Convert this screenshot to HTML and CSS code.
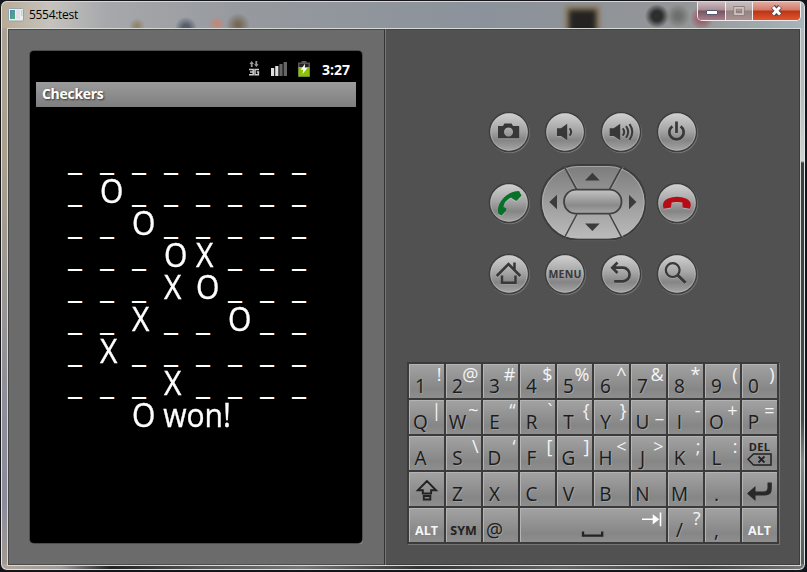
FILE: index.html
```html
<!DOCTYPE html>
<html lang="en">
<head>
<meta charset="utf-8">
<title>5554:test</title>
<link rel="stylesheet" href="styles.css">
</head>
<body>
<div class="window">
  <header class="titlebar">
    <svg class="app-icon" width="16" height="14" viewBox="0 0 16 14"><rect x=".5" y=".5" width="15" height="12.5" rx="1" fill="#e8eef2" stroke="#98a2ad"/><rect x="2" y="2" width="5" height="9" fill="url(#app)"/><rect x="8" y="2" width="4" height="9" fill="#e4dfe2"/><rect x="13" y="2" width="1.5" height="6" fill="#b9dcd2"/></svg>
    <span class="title">5554:test</span>
    <div class="controls">
      <span class="ctl min"><svg width="12" height="6" viewBox="0 0 12 6"><rect x=".5" y=".5" width="11" height="4" rx=".5" fill="#fff" stroke="#54586a"/></svg></span>
      <span class="ctl max"><svg width="12" height="10" viewBox="0 0 12 10"><path d="M2 1.8h8v6.4H2z" fill="none" stroke="#8d8080" stroke-width="3.4"/><path d="M2 1.8h8v6.4H2z" fill="none" stroke="#d0c2c0" stroke-width="1.7"/></svg></span>
      <span class="ctl close"><svg width="13" height="12" viewBox="0 0 13 12"><path d="M3 1.500l7 8.500M10 1.500l-7 8.500" stroke="#50434f" stroke-width="5"/><path d="M3 2l7 7.600M10 2l-7 7.600" stroke="#fff" stroke-width="3"/></svg></span>
    </div>
  </header>
  <main class="client">
    <section class="device">
      <div class="screen">
        <div class="status">
          <svg width="12" height="16" viewBox="0 0 12 16"><path d="M3.700 0L6 3H4.600v3H2.800V3H1.400zM8.300 6L6 3.200h1.400V0h1.800v3.200h1.500z" fill="#999"/><path d="M1 8.500h4.200v5.200H1M2 11h3M11 8.500H7v5.200h3.400V11H8.800" fill="none" stroke="#ccc" stroke-width="1.500"/></svg>
          <svg class="signal" width="16" height="14" viewBox="0 0 16 14"><path d="M0 6h3.200v8H0zM4.200 4h3.200v10H4.200z" fill="#dedede"/><path d="M8.400 2h3.200v12H8.400zM12.600 0h3.400v14h-3.400z" fill="#666"/></svg>
          <svg class="battery" width="12" height="16" viewBox="0 0 12 16"><path d="M3.500 0h5v1.600H12V16H0V1.600h3.500z" fill="#555"/><path d="M1.500 3h9v3h-9z" fill="#222"/><path d="M.5 6h11v9.500H.5z" fill="#8cc207"/><path d="M7 2.800L2.700 8.700h2.500L4.600 13l4.800-6H6.800z" fill="#fff"/></svg>
          <span>3:27</span>
        </div>
        <div class="app-title">Checkers</div>
        <div class="board">
          <i>_</i><i>_</i><i>_</i><i>_</i><i>_</i><i>_</i><i>_</i><i>_</i>
          <i>_</i><i class="piece">O</i><i>_</i><i>_</i><i>_</i><i>_</i><i>_</i><i>_</i>
          <i>_</i><i>_</i><i class="piece">O</i><i>_</i><i>_</i><i>_</i><i>_</i><i>_</i>
          <i>_</i><i>_</i><i>_</i><i class="piece">O</i><i class="piece">X</i><i>_</i><i>_</i><i>_</i>
          <i>_</i><i>_</i><i>_</i><i class="piece">X</i><i class="piece">O</i><i>_</i><i>_</i><i>_</i>
          <i>_</i><i>_</i><i class="piece">X</i><i>_</i><i>_</i><i class="piece">O</i><i>_</i><i>_</i>
          <i>_</i><i class="piece">X</i><i>_</i><i>_</i><i>_</i><i>_</i><i>_</i><i>_</i>
          <i>_</i><i>_</i><i>_</i><i class="piece">X</i><i>_</i><i>_</i><i>_</i><i>_</i>
          <b class="won piece">O won!</b>
        </div>
      </div>
    </section>
    <section class="controls-panel">
      <div class="pad">
        <svg class="btn" viewBox="-22 -22 44 44"><use href="#disc"/><g class="glyph"><path fill-rule="evenodd" d="M-11-6h5l1.400-2.600h7.200L4-6h6.200V6.300H-11zM-.5-4.500a4.500 4.500 0 1 0 .01 0z"/></g></svg>
        <svg class="btn" viewBox="-22 -22 44 44"><use href="#disc"/><g class="glyph"><path d="M-8-3.800h4L2.200-8.200V8.300L-4 4h-4z"/><path class="ln" stroke-width="2" d="M4.600-3.600q3 3.600 0 7.200"/></g></svg>
        <svg class="btn" viewBox="-22 -22 44 44"><use href="#disc"/><g class="glyph"><path d="M-11.300-3.800h4L-.8-8.200V8.300L-7.300 4h-4z"/><path class="ln" stroke-width="2" d="M1.700-3.600q3 3.600 0 7.200M5-5.800q4.400 5.800 0 11.600M8.500-7.800q5.600 7.800 0 15.600"/></g></svg>
        <svg class="btn" viewBox="-22 -22 44 44"><use href="#disc"/><g class="glyph"><path class="ln" stroke-width="2.700" d="M-4.600-5.700a7.200 7.200 0 1 0 8.200 0M-.5-10.500V1"/></g></svg>

        <svg class="btn" viewBox="-22 -22 44 44"><use href="#disc"/><path class="tinted" fill="#08702a" d="M-10.500 11Q-13 3-5-5.500Q2-12 10-12L12.500-7.500L7.500-2L4-4L2-5.500Q-5-2-5.500 4L-2.500 5.500L-3 8L-7.500 12.500z"/></svg>
        <svg class="dpad" width="108" height="78" viewBox="-1 -1 108 78">
          <rect x="1.300" y="1.500" width="105" height="75" rx="37.500" fill="none" stroke="#707070"/>
          <rect x=".9" y=".9" width="104.700" height="74.700" rx="37.300" fill="url(#dp)" stroke="#3d3d3d" stroke-width="2"/>
          <rect x="2.500" y="2.500" width="101.500" height="71.500" rx="35.700" fill="none" stroke="#bbb" stroke-opacity=".65"/>
          <path d="M24.300 2.500L37 26M82 2.500L69.300 26M24.300 74L37 50M82 74L69.300 50" stroke="#444" stroke-width="1.600"/>
          <path d="M25.700 3L37.500 24M83.300 3L71 26M25.700 73.500L38 51M83.300 73.500L71 50" stroke="#bbb" stroke-opacity=".5" stroke-width=".8"/>
          <rect x="24" y="25.700" width="57.500" height="24" rx="12" fill="url(#pill)" stroke="#414141" stroke-width="1.800"/>
          <path fill="#3b3b3b" d="M52.400 8.700L59.700 16.500H45zM52.400 67L45 59.500h14.700zM9.300 38L17 30.700v14.600zM96.400 38L89 30.700v14.600z"/>
        </svg>
        <svg class="btn" viewBox="-22 -22 44 44"><use href="#disc"/><path class="tinted" fill="#b60c16" d="M-14 3Q-14.500-2-9-4.500Q0-7.800 9-4.500Q14.500-2 13.700 3L13 5.800L5.600 4.500L5.300-.5Q0-1.600-5.300-.5L-6 4.500L-13.500 5.800z"/></svg>

        <svg class="btn" viewBox="-22 -22 44 44"><use href="#disc"/><g class="glyph"><path class="ln" stroke-width="2.500" d="M-12.300 2L-.5-10L11.300 2M5.500-11.500v8M-7 1.500v7.200h13.500v-7.200"/></g></svg>
        <svg class="btn" viewBox="-22 -22 44 44"><use href="#disc"/><text class="menu" x="0" y="4">MENU</text></svg>
        <svg class="btn" viewBox="-22 -22 44 44"><use href="#disc"/><g class="glyph"><path class="ln" stroke-width="2.700" d="M-3.500-11.500L-8.700-6.300L-3.500-1M-8.500-6.300H1.800a6.600 6.600 0 0 1 0 13.600h-8.600"/></g></svg>
        <svg class="btn" viewBox="-22 -22 44 44"><use href="#disc"/><g class="glyph"><circle class="ln" cx="-4.300" cy="-3.900" r="6.900" stroke-width="2.200"/><path class="ln" stroke-width="3" d="M.5 1L8.500 8.800"/></g></svg>
      </div>

      <div class="keys">
        <div class="key"><b>1</b><s>!</s></div><div class="key"><b>2</b><s>@</s></div><div class="key"><b>3</b><s>#</s></div><div class="key"><b>4</b><s>$</s></div><div class="key"><b>5</b><s>%</s></div><div class="key"><b>6</b><s>^</s></div><div class="key"><b>7</b><s>&amp;</s></div><div class="key"><b>8</b><s>*</s></div><div class="key"><b>9</b><s>(</s></div><div class="key"><b>0</b><s>)</s></div>
        <div class="key"><b>Q</b><s>|</s></div><div class="key"><b>W</b><s>~</s></div><div class="key"><b>E</b><s>“</s></div><div class="key"><b>R</b><s>`</s></div><div class="key"><b>T</b><s>{</s></div><div class="key"><b>Y</b><s>}</s></div><div class="key"><b>U</b><s>_</s></div><div class="key"><b>I</b><s>-</s></div><div class="key"><b>O</b><s>+</s></div><div class="key"><b>P</b><s>=</s></div>
        <div class="key"><b>A</b></div><div class="key"><b>S</b><s>\</s></div><div class="key"><b>D</b><s>‘</s></div><div class="key"><b>F</b><s>[</s></div><div class="key"><b>G</b><s>]</s></div><div class="key"><b>H</b><s>&lt;</s></div><div class="key"><b>J</b><s>&gt;</s></div><div class="key"><b>K</b><s>;</s></div><div class="key"><b>L</b><s>:</s></div>
        <div class="key del"><span>DEL</span><svg width="25" height="13" viewBox="0 0 25 13"><path d="M1 6.300L6.500 1H24v11H6.500z" fill="none" stroke="#222" stroke-width="1.500"/><path d="M11.500 3.500l6 6M17.500 3.500l-6 6" stroke="#222" stroke-width="1.800"/></svg></div>
        <div class="key icon"><svg width="35" height="34" viewBox="0 0 35 34"><path d="M18 9L8.800 18.300h5v3.200h8.300v-3.200h5zM14.800 24h6.500v3.500h-6.500z" fill="none" stroke="#222" stroke-width="1.900"/></svg></div>
        <div class="key"><b>Z</b></div><div class="key"><b>X</b></div><div class="key"><b>C</b></div><div class="key"><b>V</b></div><div class="key"><b>B</b></div><div class="key"><b>N</b></div><div class="key"><b>M</b></div><div class="key"><b>.</b></div>
        <div class="key icon"><svg width="35" height="34" viewBox="0 0 35 34"><path d="M5 21.500L13.500 14v5.500h8q4 0 4-4V10.500h4.300v6q0 7-7 7h-9.300V29z" fill="#292929"/></svg></div>
        <div class="key mod lit">ALT</div><div class="key mod">SYM</div><div class="key"><b>@</b></div>
        <div class="key space"><svg width="146" height="34" viewBox="0 0 146 34"><path d="M63 23.500v4.200h19.200v-4.200" fill="none" stroke="#222" stroke-width="2.300"/><path d="M122 11.300h16M133.500 7.800l4.500 3.500-4.500 3.500zM140.500 4.500v13.700" fill="#fff" stroke="#fff" stroke-width="1.600"/></svg></div>
        <div class="key"><b>/</b><s>?</s></div><div class="key"><b>,</b></div><div class="key mod lit">ALT</div>
      </div>
    </section>
  </main>
</div>
<svg class="defs" width="0" height="0">
  <defs>
    <linearGradient id="app" x2="1" y2="1"><stop stop-color="#4f86b5"/><stop offset="1" stop-color="#4fae74"/></linearGradient>
    <linearGradient id="metal" x2="0" y2="1"><stop stop-color="#d0d0d0"/><stop offset=".45" stop-color="#a6a6a6"/><stop offset=".72" stop-color="#858585"/><stop offset="1" stop-color="#a6a6a6"/></linearGradient>
    <linearGradient id="pill" x2="0" y2="1"><stop stop-color="#c4c4c4"/><stop offset=".65" stop-color="#8a8a8a"/><stop offset="1" stop-color="#a8a8a8"/></linearGradient>
    <linearGradient id="dp" x2="0" y2="1"><stop stop-color="#7c7c7c"/><stop offset="1" stop-color="#bcbcbc"/></linearGradient>
    <g id="disc"><circle cx=".7" cy=".9" r="20.300" fill="#757575"/><circle r="20.300" fill="#3d3d3d"/><circle r="18.800" fill="url(#metal)"/><circle r="18.200" fill="none" stroke="#d0d0d0" stroke-opacity=".4"/></g>
  </defs>
</svg>
</body>
</html>
```
FILE: styles.css
```css
* { box-sizing: border-box; }
body {
  margin: 0;
  background: #11141a;
  font-family: "Open Sans", "Noto Sans", sans-serif;
}
.defs { display: block; height: 0; }
.window {
  width: 806px;
  height: 571px;
  border: 1px solid #16161a;
  border-radius: 7px;
  padding: 0 6px 6px;
  overflow: hidden;
  box-shadow: inset 0 0 0 1px #dfe3e6;
  background:
    linear-gradient(90deg, #b3a598 0, #9c9a98 60px, #222 110px, #555 200px, #777 300px, #333 420px, #666 560px, #444 700px, #777) 0 100% / 100% 6px no-repeat,
    linear-gradient(#a9b9c0, #b5babd 90px, #d0d0d0 160px, #3e3e3e 162px, #4a4a4a 420px, #888 460px, #555) 100% 0 / 7px 100% no-repeat,
    linear-gradient(#a9a297, #aaa08c 150px, #8d8e98 400px, #8b8b9b 500px, #a39a90) 0 0 / 7px 100% no-repeat,
    #777;
}
.titlebar {
  position: relative;
  height: 27px;
  margin: 0 -5px;
  padding-left: 6px;
  display: flex;
  align-items: center;
  overflow: hidden;
  border-top: 1px solid #d5d8db;
  border-radius: 6px 6px 0 0;
  background:
    radial-gradient(circle at 655px 14px, #2e2e2e 0 5px, #2e2e2e00 12px),
    radial-gradient(circle at 676px 14px, #6d706e 0 3px, #6d706e00 12px),
    radial-gradient(circle at 700px 16px, #9a5865 0 3px, #9a586500 12px),
    radial-gradient(circle at 184px 26px, #555d6b 0 3px, #555d6b00 11px),
    radial-gradient(circle at 215px 22px, #c28878 0 1px, #c2887800 8px),
    radial-gradient(circle at 236px 23px, #756858 0 2px, #75685800 12px),
    radial-gradient(circle at 135px 24px, #8f8468 0 1px, #8f846800 8px),
    linear-gradient(90deg, #b8ab95, #c6c3be 6%, #a6a8ab 13%, #96999e 30%, #8b929b 60%, #949597 85%, #a6b5ba);
}
.titlebar::before {
  content: "";
  position: absolute;
  left: 567px;
  top: 8px;
  width: 27px;
  height: 26px;
  background: #242322;
  box-shadow: 0 0 0 4px #8c7a5c;
  filter: blur(2.5px);
}
.title {
  margin-left: 5px;
  font: 12px/16px "Open Sans", sans-serif;
  letter-spacing: -.3px;
  color: #000;
}
.controls {
  position: relative;
  display: flex;
  align-self: flex-start;
  height: 20px;
  margin: -1px 3px 0 auto;
  border: 1px solid #f0eaea;
  border-top: 0;
  border-radius: 0 0 5px 5px;
  overflow: hidden;
}
.ctl { display: flex; align-items: center; justify-content: center; }
.min { width: 28px; padding-top: 4px; background: linear-gradient(#d0c0c4, #a98c94 48%, #755360 52%, #a77f8b); border-right: 1px solid #eee; }
.max { width: 27px; background: linear-gradient(#c9c0c0, #b3a7a6 48%, #91817f 52%, #a99492); border-right: 1px solid #eee; }
.close { width: 47px; background: linear-gradient(#e2b1a8, #d37a65 48%, #b93517 52%, #e1552b); }
.client {
  display: flex;
  width: 794px;
  height: 538px;
  border: 1px solid #d6dad7;
  overflow: hidden;
}
.device {
  width: 377px;
  padding: 22px 0 0 22px;
  background: #6b6b6b;
  border-right: 1px solid #343434;
  box-shadow: inset 1px 1px #4b4b4b, inset 0 -1px #4b4b4b;
}
.screen {
  width: 332px;
  height: 492px;
  padding: 6px;
  background: #000;
  border-radius: 4px;
  box-shadow: 0 0 0 1px #4d4d4d, 1px 1px 0 0 #a0a0a0;
  color: #fff;
}
.status {
  height: 25px;
  width: 320px;
  display: flex;
  align-items: center;
  justify-content: flex-end;
  padding: 0 6px 1px 0;
  font-weight: 700;
  font-size: 14px;
}
.signal { margin-left: 11px; }
.battery { margin: 0 12px 0 11px; }
.app-title {
  width: 320px;
  height: 25px;
  padding-left: 6px;
  background: linear-gradient(#9b9b9b, #7e7e7e);
  font: 700 14px/24px "Open Sans", sans-serif;
  letter-spacing: -.3px;
  text-shadow: 1px 1px 2px #333;
}
.board {
  display: grid;
  grid-template-columns: repeat(8, 32px);
  grid-auto-rows: 32px;
  margin: 35px 0 0 32px;
  font-size: 32px;
  line-height: 32px;
}
.board i { font-style: normal; }
.board .piece {
  padding-top: 1px;
  transform: scaleX(.94);
  transform-origin: 0 0;
  -webkit-text-stroke: .35px #fff;
}
.won { grid-column: 3 / 9; font-weight: 400; }
.controls-panel {
  flex: 1;
  padding-left: 21px;
  background: #515151;
  border-left: 1px solid #777;
  box-shadow: inset 0 1px #444, inset -1px -1px #3c3c3c;
}
.pad {
  display: grid;
  grid-template-columns: repeat(4, 56px);
  grid-template-rows: repeat(3, 71px);
  place-items: center;
  width: 224px;
  margin: 67px 0 0 73.6px;
}
.btn { width: 44px; height: 44px; display: block; }
.dpad { grid-column: span 2; display: block; margin-bottom: 1.5px; }
.glyph { fill: #383838; filter: drop-shadow(0 1px 0 #c0c0c055); }
.glyph .ln { fill: none; stroke: #383838; }
.tinted { filter: drop-shadow(0 1px 0 #ccc8); }
.menu {
  font: 700 10.5px "Open Sans", sans-serif;
  text-anchor: middle;
  letter-spacing: .2px;
  fill: #383838;
}
.keys {
  display: grid;
  grid-template-columns: repeat(10, 35px);
  grid-auto-rows: 34px;
  gap: 2px;
  width: 372px;
  margin-top: 53px;
  padding: 2px;
  height: 182px;
  background: #3b3b3b;
  box-shadow: 1px 1px #747474;
}
.key {
  display: flex;
  justify-content: space-between;
  background: linear-gradient(#a3a3a3, #868686 75%, #8e8e8e);
  box-shadow: inset 1px 1px #b4b4b4;
}
.key b {
  width: 22px;
  display: flex;
  justify-content: center;
  flex: none;
  padding-top: 7px;
  font-weight: 400;
  font-size: 20px;
  line-height: 29px;
  height: 34px;
  color: #1c1c1c;
  text-shadow: 1px 1px 0 #b5b5b580;
  transform: translateX(.5px) scaleX(.95);
}
.key s {
  text-decoration: none;
  color: #f4f4f4;
  font-size: 18px;
  line-height: 20px;
  width: 20px;
  margin: 0 2.5px 0 -9.5px;
  display: flex;
  justify-content: flex-end;
}
.key.mod {
  justify-content: center;
  font-weight: 700;
  font-size: 12.5px;
  line-height: 45px;
  height: 34px;
  color: #222;
}
.key.lit { color: #f6f6f6; }
.key.del {
  flex-direction: column;
  align-items: center;
  justify-content: flex-start;
  font: 700 11px/13px "Open Sans", sans-serif;
  color: #222;
  padding-top: 4px;
  letter-spacing: .3px;
}
.key.icon, .key.space { display: block; }
.key.space { grid-column: span 4; }
```
